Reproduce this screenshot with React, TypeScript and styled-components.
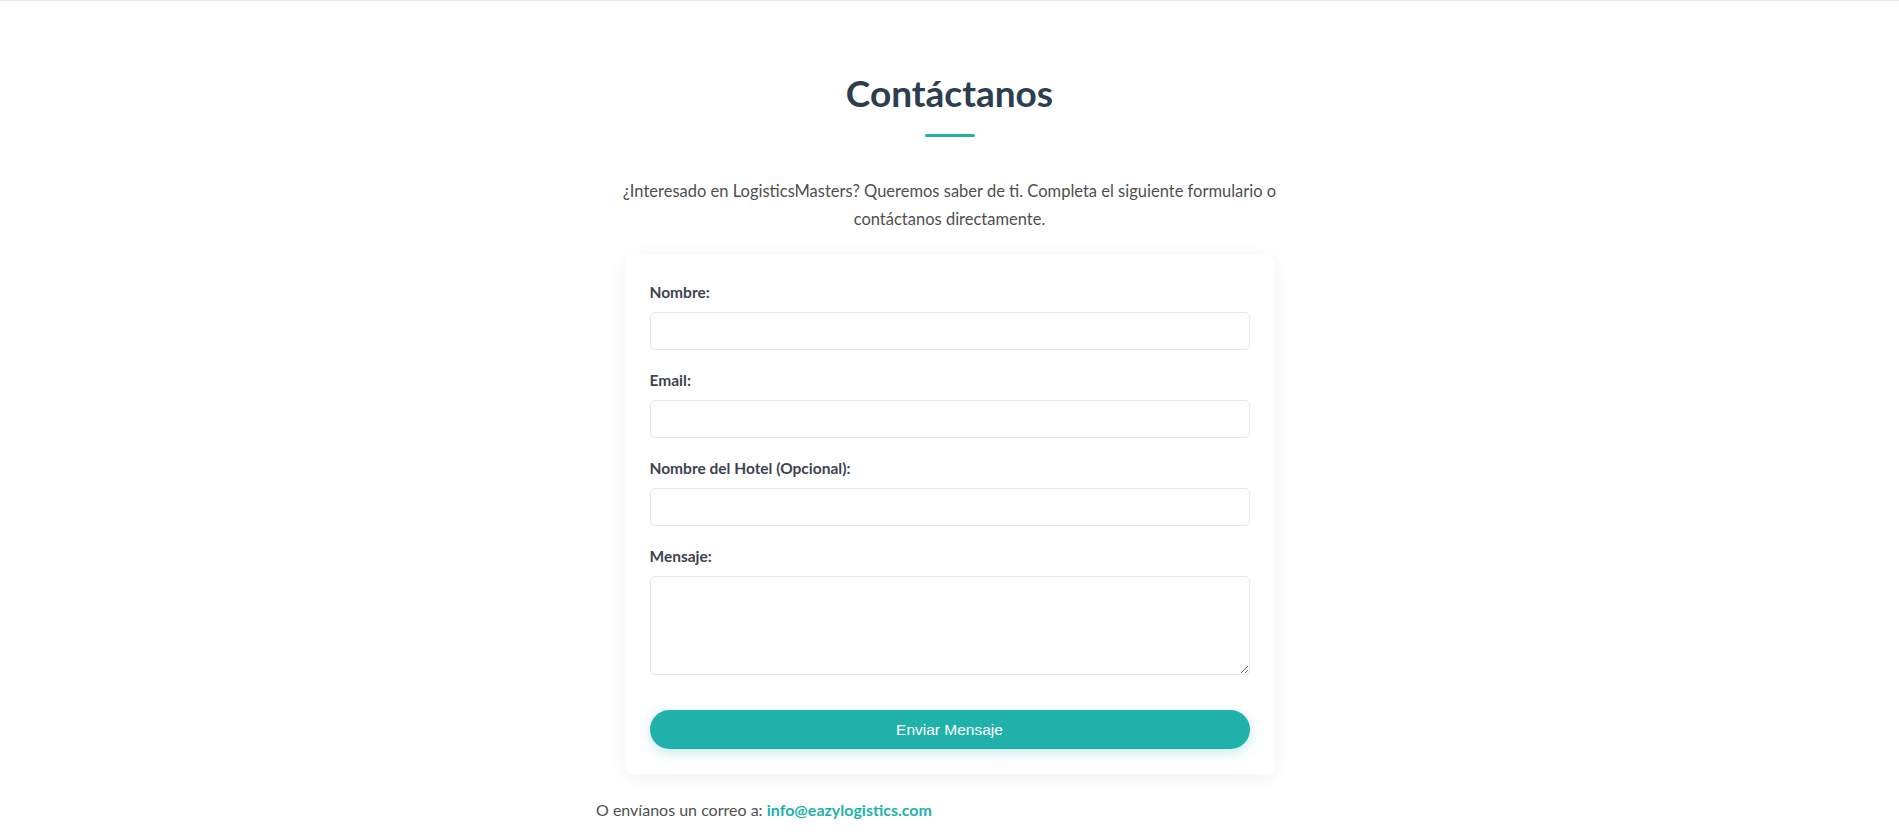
import React from "react";
import styled, { createGlobalStyle } from "styled-components";

const GlobalStyle = createGlobalStyle`
  * {
    box-sizing: border-box;
  }
  body {
    margin: 0;
    background: #ffffff;
    font-family: "Lato", "Open Sans", "Noto Sans", sans-serif;
    color: #444;
  }
`;

const Page = styled.main`
  border-top: 1px solid #e3e8ee;
  min-height: 835px;
`;

const Section = styled.section`
  max-width: 707px;
  margin: 0 auto;
  padding-top: 68px;
  padding-bottom: 20px;
`;

const Title = styled.h2`
  margin: 0;
  text-align: center;
  font-size: 37px;
  font-weight: 700;
  line-height: 48px;
  color: #2c3e50;
`;

const Accent = styled.div`
  width: 50px;
  height: 3px;
  margin: 17px auto 0;
  background: #20b2aa;
  border-radius: 2px;
`;

const Intro = styled.p`
  margin: 40px auto 22px;
  max-width: 680px;
  text-align: center;
  font-size: 16.5px;
  line-height: 28px;
  color: #4f4f4f;
`;

const Card = styled.form`
  width: 650px;
  margin: 0 auto;
  padding: 25px;
  background: #fff;
  border-radius: 8px;
  box-shadow: 0 4px 22px rgba(0, 0, 0, 0.06);
`;

const Field = styled.div`
  margin-bottom: 18px;
`;

const Label = styled.label`
  display: block;
  margin-bottom: 8px;
  font-size: 15.5px;
  font-weight: 700;
  line-height: 24px;
  color: #3d4450;
`;

const Input = styled.input`
  display: block;
  width: 100%;
  height: 38px;
  padding: 8px 12px;
  border: 1px solid #e3e8ee;
  border-radius: 5px;
  font-family: inherit;
  font-size: 15px;
  background: #fff;
  outline: none;
`;

const TextArea = styled.textarea`
  display: block;
  width: 100%;
  height: 99px;
  padding: 8px 12px;
  border: 1px solid #e3e8ee;
  border-radius: 5px;
  font-family: inherit;
  font-size: 15px;
  background: #fff;
  resize: vertical;
  outline: none;
`;

const SubmitButton = styled.button`
  display: block;
  width: 100%;
  height: 39px;
  margin-top: 35px;
  border: none;
  border-radius: 25px;
  background: #20b2aa;
  color: #fff;
  font-family: "Liberation Sans", Arial, sans-serif;
  font-size: 15.5px;
  cursor: pointer;
  box-shadow: 0 4px 12px rgba(32, 178, 170, 0.25);
`;

const Alt = styled.p`
  margin: 24px 0 0;
  font-size: 16px;
  line-height: 24px;
  color: #4f4f4f;

  & > a {
    color: #20b2aa;
    font-weight: 700;
    text-decoration: none;
  }
`;

const fields = [
  { id: "nombre", label: "Nombre:", type: "text" },
  { id: "email", label: "Email:", type: "email" },
  { id: "hotel", label: "Nombre del Hotel (Opcional):", type: "text" },
];

export default function App() {
  return (
    <>
      <GlobalStyle />
      <Page>
        <Section>
          <Title>Contáctanos</Title>
          <Accent />
          <Intro>
            ¿Interesado en LogisticsMasters? Queremos saber de ti. Completa el
            siguiente formulario o contáctanos directamente.
          </Intro>
          <Card onSubmit={(e) => e.preventDefault()}>
            {fields.map((f) => (
              <Field key={f.id}>
                <Label htmlFor={f.id}>{f.label}</Label>
                <Input id={f.id} type={f.type} />
              </Field>
            ))}
            <Field>
              <Label htmlFor="mensaje">Mensaje:</Label>
              <TextArea id="mensaje" />
            </Field>
            <SubmitButton type="submit">Enviar Mensaje</SubmitButton>
          </Card>
          <Alt>
            O envíanos un correo a:{" "}
            <a href="mailto:info@eazylogistics.com">info@eazylogistics.com</a>
          </Alt>
        </Section>
      </Page>
    </>
  );
}
